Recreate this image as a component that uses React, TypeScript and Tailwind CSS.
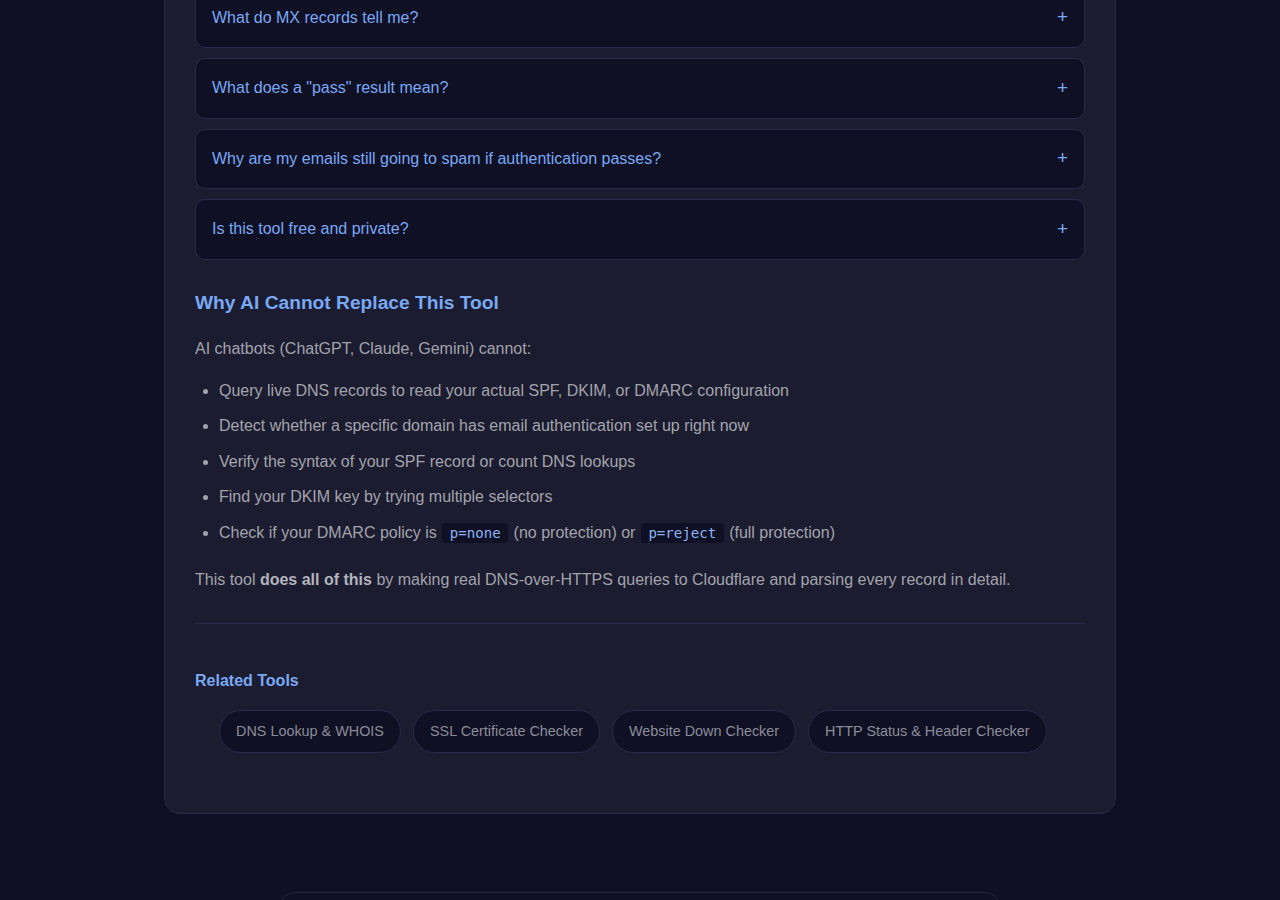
import React from "react";

const faqs = [
  "What do MX records tell me?",
  'What does a "pass" result mean?',
  "Why are my emails still going to spam if authentication passes?",
  "Is this tool free and private?",
];

const bullets: React.ReactNode[] = [
  "Query live DNS records to read your actual SPF, DKIM, or DMARC configuration",
  "Detect whether a specific domain has email authentication set up right now",
  "Verify the syntax of your SPF record or count DNS lookups",
  "Find your DKIM key by trying multiple selectors",
];

const tools = [
  "DNS Lookup & WHOIS",
  "SSL Certificate Checker",
  "Website Down Checker",
  "HTTP Status & Header Checker",
];

function Code({ children }: { children: React.ReactNode }) {
  return (
    <code className="mx-px rounded-[4px] bg-[#0f1024] px-[7.5px] py-[2px] text-[14.08px] text-[#8ab4f8] [font-family:'DejaVu_Sans_Mono',monospace]">
      {children}
    </code>
  );
}

export default function App() {
  return (
    <div className="min-h-[900px] h-[900px] overflow-hidden bg-[#0f1024] [font-family:'Liberation_Sans',Arial,sans-serif]">
      <div className="mx-auto w-[952px] -mt-[43.5px] rounded-[16px] border border-[#2a2a4c] bg-[#1b1c2f] px-[30px] pt-[30px] pb-[60px]">
        <div className="flex flex-col gap-[10px]">
          {faqs.map((q) => (
            <div
              key={q}
              className="flex h-[60.5px] items-center justify-between rounded-[10px] border border-[#2a2a4c] bg-[#0f1024] px-4 text-[16px] text-[#79a8f5]"
            >
              <span>{q}</span>
              <span className="-mt-[2px] text-[19px] leading-none">+</span>
            </div>
          ))}
        </div>

        <h2 className="mt-[31px] text-[19.2px] font-bold leading-[1.3] text-[#79a8f5]">
          Why AI Cannot Replace This Tool
        </h2>
        <p className="mt-[21px] text-[16px] leading-[1.6] text-[#a3a3ad]">
          AI chatbots (ChatGPT, Claude, Gemini) cannot:
        </p>
        <ul className="mt-[16px] list-disc pl-[24px] text-[16px] leading-[1.6] text-[#a3a3ad] marker:text-[#a3a3ad]">
          {bullets.map((b, i) => (
            <li key={i} className="mb-[9.8px]">
              {b}
            </li>
          ))}
          <li className="mb-[10px]">
            Check if your DMARC policy is <Code>p=none</Code> (no protection) or{" "}
            <Code>p=reject</Code> (full protection)
          </li>
        </ul>
        <p className="mt-[22px] text-[16px] leading-[1.6] text-[#a3a3ad]">
          This tool <strong className="font-bold text-[#b4b4bd]">does all of this</strong> by making real
          DNS-over-HTTPS queries to Cloudflare and parsing every record in detail.
        </p>

        <div className="mt-[30px] h-px bg-[#2a2a4c]" />

        <h3 className="mt-[46px] text-[16px] font-bold leading-[1.4] text-[#79a8f5]">Related Tools</h3>
        <ul className="mt-[18px] flex flex-wrap gap-[12px] pl-[24px]">
          {tools.map((t) => (
            <li
              key={t}
              className="rounded-full border border-[#2a2a4c] bg-[#0f1024] px-4 py-[9px] text-[14.4px] leading-[1.6] text-[#8c8c99]"
            >
              {t}
            </li>
          ))}
        </ul>
      </div>

      <div className="mx-auto mt-[78px] h-[60px] w-[722px] rounded-[16px] border border-[#26263a] bg-[#0f1024]" />
    </div>
  );
}
